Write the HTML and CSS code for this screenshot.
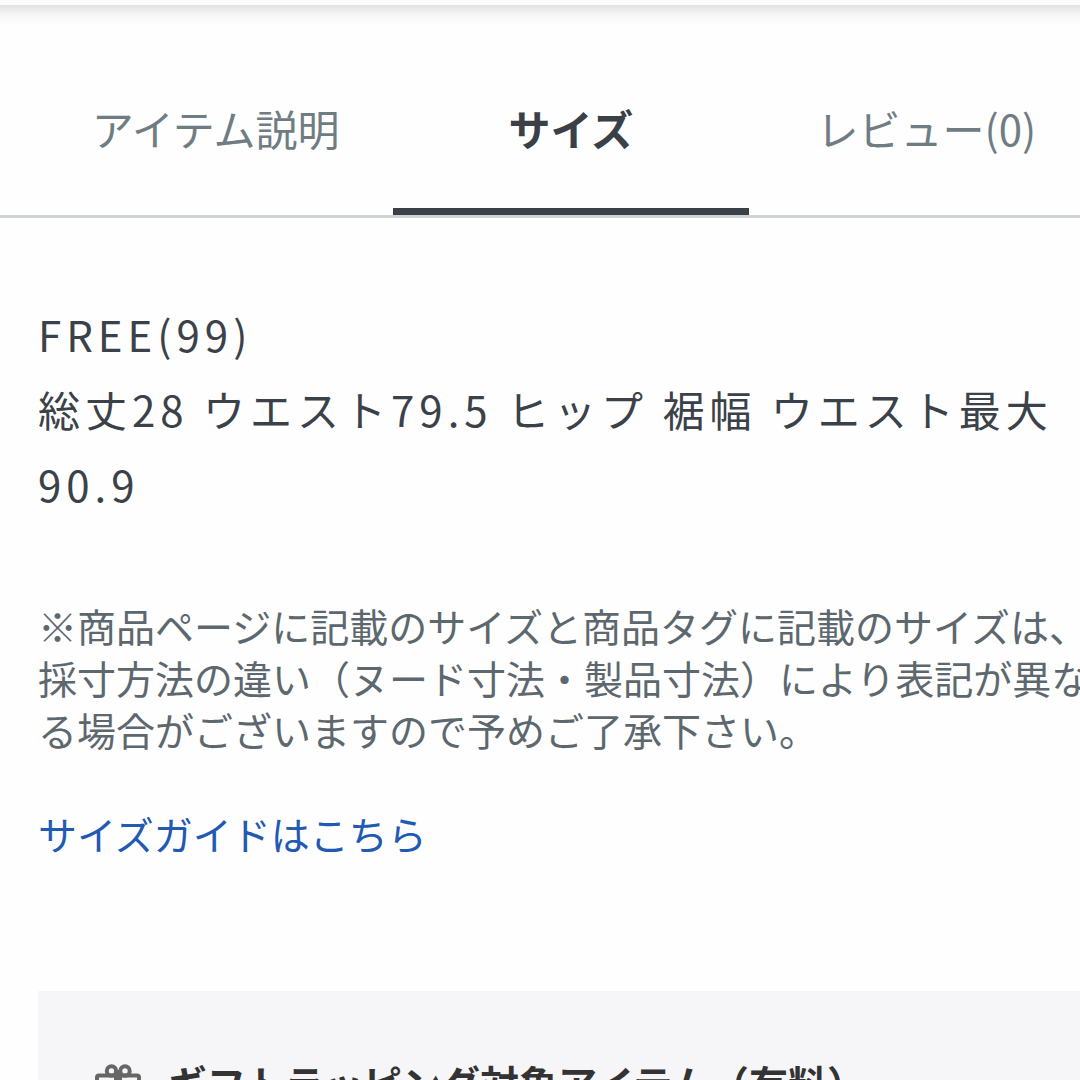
FILE: index.html
```html
<!DOCTYPE html>
<html lang="ja">
<head>
<meta charset="utf-8">
<title>サイズ</title>
<link rel="stylesheet" href="styles.css">
</head>
<body>
<div class="page">
  <div class="shade"></div>
  <nav class="tabs">
    <button type="button" class="tab">アイテム説明</button>
    <button type="button" class="tab active">サイズ</button>
    <button type="button" class="tab">レビュー(0)</button>
  </nav>
  <main class="content">
    <p class="size">FREE(99)<br>総丈28 ウエスト79.5 ヒップ 裾幅 ウエスト最大90.9</p>
    <p class="note">※商品ページに記載のサイズと商品タグに記載のサイズは、採寸方法の違い（ヌード寸法・製品寸法）により表記が異なる場合がございますので予めご了承下さい。</p>
    <a class="guide" href="#">サイズガイドはこちら</a>
    <section class="gift">
      <svg class="gift-icon" viewBox="0 0 48 36" fill="none" stroke="#666" stroke-width="4">
        <circle cx="17.5" cy="7" r="4.7"/>
        <circle cx="31" cy="7" r="4.7"/>
        <rect x="3" y="11.5" width="42" height="9" rx="2"/>
        <path d="M7 20v14h34V20"/>
        <path d="M24 6v28" stroke-width="8"/>
      </svg>
      <h2 class="gift-title">ギフトラッピング対象アイテム（有料）</h2>
    </section>
  </main>
</div>
</body>
</html>
```
FILE: styles.css
```css
html {
	overflow:hidden;
}
body {
	margin:0;
	background-color:#fefefe;
	color:#3b4148;
	font-family:"Noto Sans CJK JP", sans-serif;
}
/* 右側は画面の外まで続く */
.page {
	width:calc(100% + 62px);
}
.shade {
	height:20px;
	border-top:5px solid #fcfcfc;
	background-image:linear-gradient(to bottom, #e2e2e2, #f6f6f6 50%, #fefefe);
}
.tabs {
	display:flex;
	padding:27px 38px 0;
	border-bottom:3px solid #d0d3d4;
}
.tab {
	flex:1;
	padding:45px 0 49px;
	border:0;
	border-bottom:7px solid transparent;
	background:none;
	color:#6f7d83;
	font-family:inherit;
	font-size:42px;
	line-height:62px;
	white-space:nowrap;
	cursor:pointer;
}
.tab.active {
	border-bottom-color:#3b4047;
	color:#3b4047;
	font-weight:bold;
}
.content {
	padding:78px 38px 0;
}
.size {
	margin:0 0 78px;
	font-size:42px;
	line-height:75px;
	letter-spacing:5px;
}
.note {
	margin:0 0 52px;
	color:#5d676e;
	font-size:39px;
	line-height:52px;
}
.guide {
	display:block;
	margin-bottom:132px;
	color:#2259b2;
	font-size:39px;
	line-height:52px;
	text-decoration:none;
}
.gift {
	display:flex;
	align-items:center;
	gap:26px;
	padding:65px 56px;
	background-color:#f6f6f9;
}
.gift-icon {
	width:48px;
	height:36px;
}
.gift-title {
	margin:0;
	color:#333;
	font-size:39px;
	line-height:52px;
}
```
